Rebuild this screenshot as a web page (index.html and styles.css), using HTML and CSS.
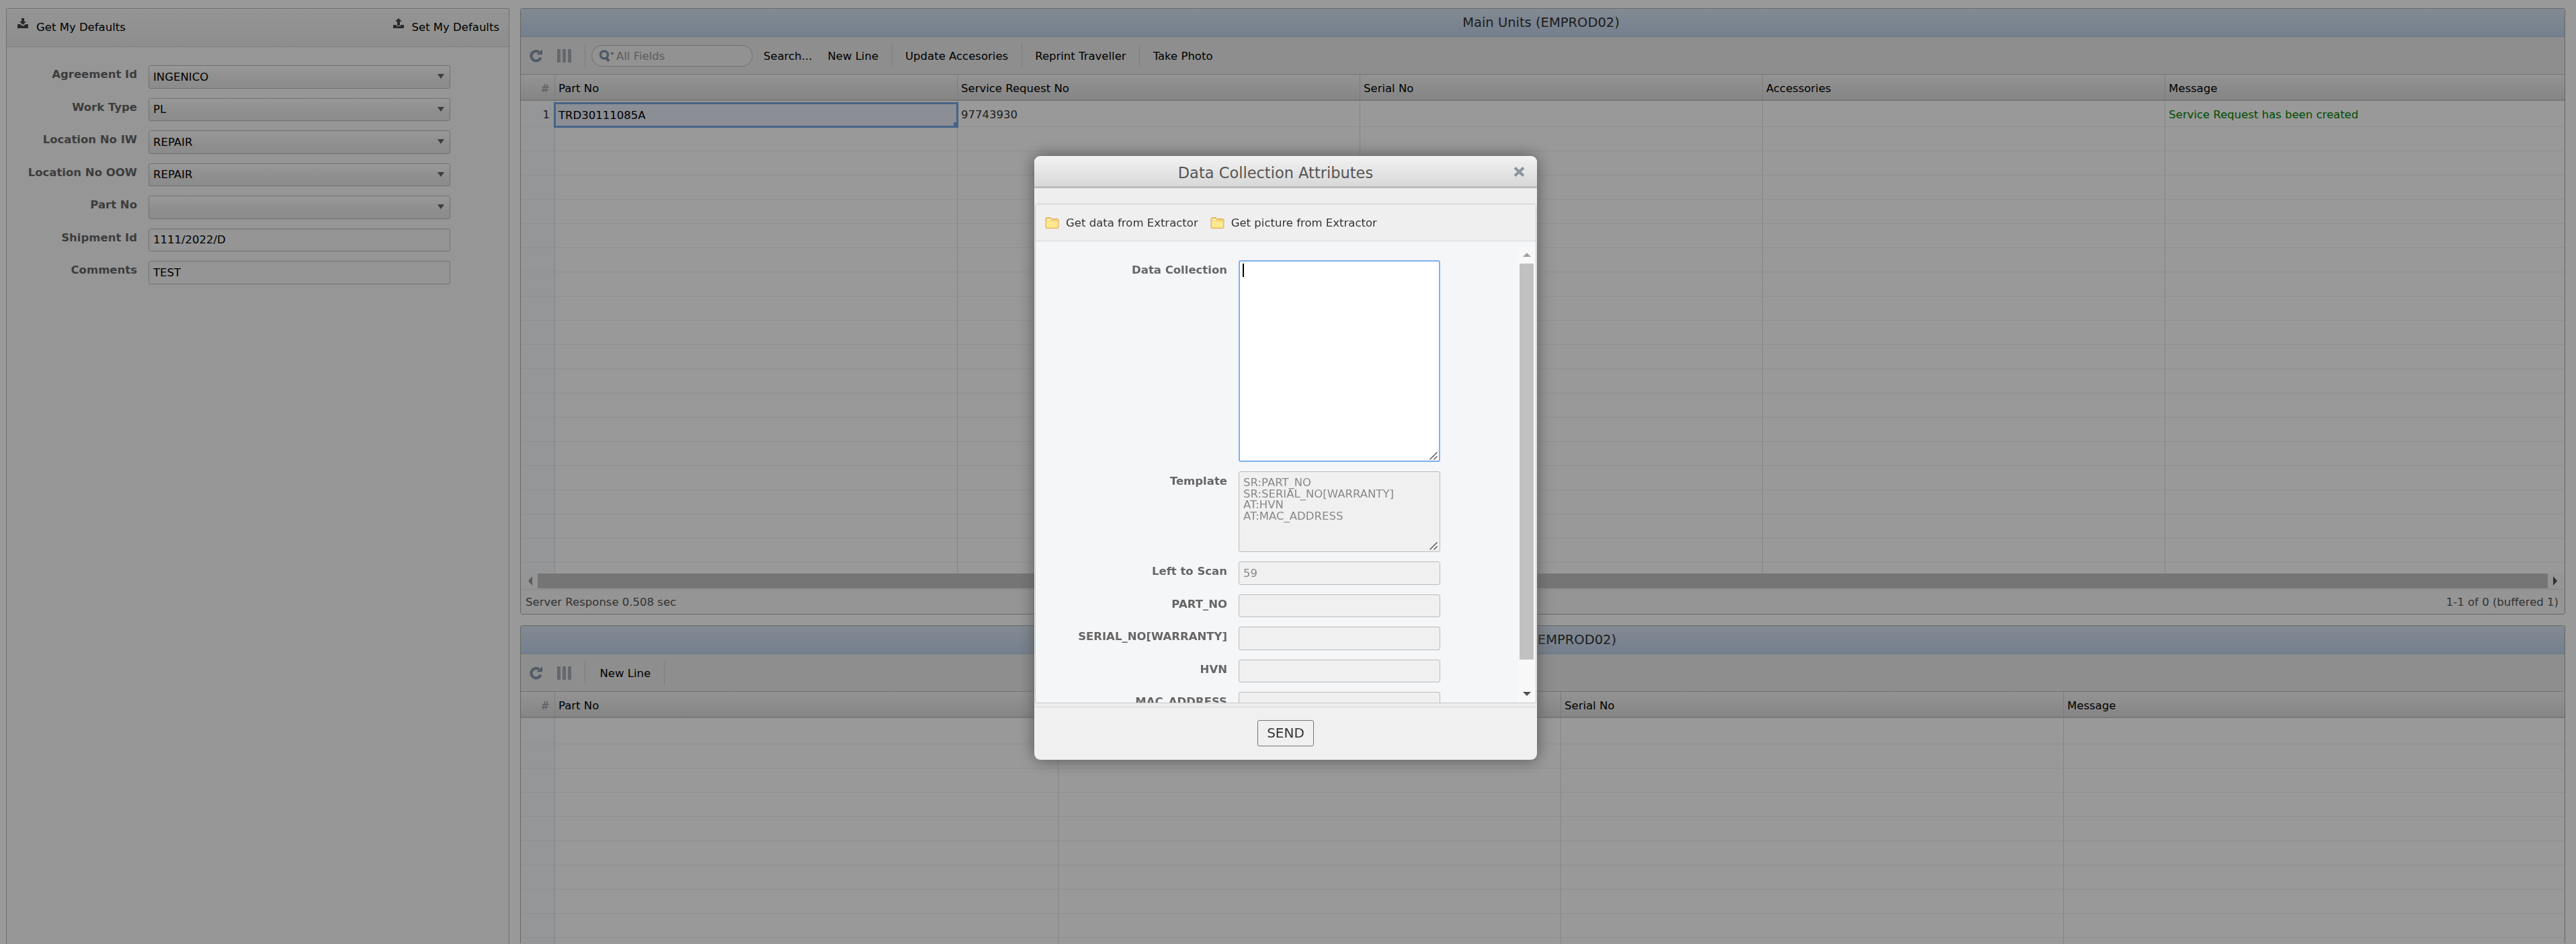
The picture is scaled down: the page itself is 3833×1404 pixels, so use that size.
FILE: index.html
```html
<!DOCTYPE html>
<html>
<head>
  <title>Data Collection</title>
  <link rel="stylesheet" href="styles.css">
</head>
<body>
  <svg class="icon-defs" width="0" height="0">
    <symbol id="i-refresh" viewBox="0 0 20 20">
      <path d="M16.500 12.500A7.200 7.200 0 1 1 14.200 4.600" fill="none" stroke="currentColor" stroke-width="4"/>
      <path d="M10.500 8.200 19 0.500V8.200Z" fill="currentColor"/>
    </symbol>
    <symbol id="i-cols" viewBox="0 0 21 20">
      <path d="M0 0h5v20H0zM8 0h5v20H8zM16 0h5v20h-5z" fill="currentColor"/>
    </symbol>
    <symbol id="i-folder" viewBox="0 0 21 17">
      <path d="M1 2.500Q1 .5 3 .5H8L10 2.500H18Q20 2.500 20 4.500V15Q20 16.500 18.500 16.500H2.500Q1 16.500 1 15Z" fill="#f3cf6e" stroke="#e0a95a"/>
      <path d="M2 6H19V15.500H2Z" fill="#fbe88f"/>
      <path d="M3 4H9" stroke="#fff" stroke-width="1.500"/>
    </symbol>
    <symbol id="i-grip" viewBox="0 0 12 12">
      <path d="M0.500 11.500 11.500 0.500M6.500 11.500 11.500 6.500" stroke="#444" stroke-width="1.200"/>
    </symbol>
  </svg>

  <div class="app">
    <aside class="side">
      <div class="side-head">
        <a class="def-btn">
          <svg width="16" height="15" viewBox="0 0 16 15"><path d="M6 0h4v5h3L8 10 3 5h3zM0 9h4l4 3 4-3h4v6H0z" fill="#464646"/></svg>
          Get My Defaults
        </a>
        <a class="def-btn">
          <svg width="16" height="15" viewBox="0 0 16 15"><path d="M8 0l5 5h-3v6H6V5H3zM0 10h5v2h6v-2h5v5H0z" fill="#464646"/></svg>
          Set My Defaults
        </a>
      </div>
      <form class="side-form">
        <div class="field">
          <label>Agreement Id</label>
          <div class="select-wrap"><select><option>INGENICO</option></select></div>
        </div>
        <div class="field">
          <label>Work Type</label>
          <div class="select-wrap"><select><option>PL</option></select></div>
        </div>
        <div class="field">
          <label>Location No IW</label>
          <div class="select-wrap"><select><option>REPAIR</option></select></div>
        </div>
        <div class="field">
          <label>Location No OOW</label>
          <div class="select-wrap"><select><option>REPAIR</option></select></div>
        </div>
        <div class="field">
          <label>Part No</label>
          <div class="select-wrap"><select><option></option></select></div>
        </div>
        <div class="field">
          <label>Shipment Id</label>
          <input type="text" value="1111/2022/D">
        </div>
        <div class="field">
          <label>Comments</label>
          <input type="text" value="TEST">
        </div>
      </form>
    </aside>

    <main class="grids">
      <section class="panel panel-main">
        <div class="panel-title">Main Units (EMPROD02)</div>
        <div class="toolbar">
          <svg class="tb-icon"><use href="#i-refresh"/></svg>
          <svg class="tb-icon tb-cols"><use href="#i-cols"/></svg>
          <span class="tb-sep"></span>
          <div class="search">
            <svg width="24" height="18" viewBox="0 0 24 18"><circle cx="8" cy="7.500" r="5.500" fill="none" stroke="#8496a8" stroke-width="3.500"/><path d="M11 12l4 5" stroke="#8496a8" stroke-width="4"/><path d="M17 4h6l-3 4z" fill="#8496a8"/></svg>
            <span>All Fields</span>
          </div>
          <a class="tb-btn tb-first">Search...</a>
          <a class="tb-btn">New Line</a>
          <span class="tb-sep"></span>
          <a class="tb-btn">Update Accesories</a>
          <span class="tb-sep"></span>
          <a class="tb-btn">Reprint Traveller</a>
          <span class="tb-sep"></span>
          <a class="tb-btn">Take Photo</a>
        </div>
        <div class="grid-head">
          <div class="cell-num">#</div>
          <div class="cell-h w599">Part No</div>
          <div class="cell-h w599">Service Request No</div>
          <div class="cell-h w599">Serial No</div>
          <div class="cell-h w599">Accessories</div>
          <div class="cell-h grow">Message</div>
        </div>
        <div class="grid-body">
          <div class="col-num"><div class="row-val">1</div></div>
          <div class="col w599"><div class="row-val row-selected">TRD30111085A<i class="sel-handle"></i></div></div>
          <div class="col w599"><div class="row-val">97743930</div></div>
          <div class="col w599"></div>
          <div class="col w599"></div>
          <div class="col grow"><div class="row-val msg-ok">Service Request has been created</div></div>
        </div>
        <div class="hscroll">
          <span class="arrow-left"></span>
          <div class="hscroll-thumb"></div>
          <span class="arrow-right"></span>
        </div>
        <div class="panel-foot">
          <span>Server Response 0.508 sec</span>
          <span>1-1 of 0 (buffered 1)</span>
        </div>
      </section>

      <section class="panel panel-lower">
        <div class="panel-title">Sub Units (EMPROD02)</div>
        <div class="toolbar">
          <svg class="tb-icon"><use href="#i-refresh"/></svg>
          <svg class="tb-icon tb-cols"><use href="#i-cols"/></svg>
          <span class="tb-sep"></span>
          <a class="tb-btn tb-newline">New Line</a>
          <span class="tb-sep"></span>
        </div>
        <div class="grid-head">
          <div class="cell-num">#</div>
          <div class="cell-h w749">Part No</div>
          <div class="cell-h w748">Service Request No</div>
          <div class="cell-h w748">Serial No</div>
          <div class="cell-h grow">Message</div>
        </div>
        <div class="grid-body">
          <div class="col-num"></div>
          <div class="col w749"></div>
          <div class="col w748"></div>
          <div class="col w748"></div>
          <div class="col grow"></div>
        </div>
      </section>
    </main>
  </div>

  <div class="overlay"></div>

  <div class="popup">
    <div class="popup-title">
      Data Collection Attributes
      <svg class="popup-close" width="17" height="15" viewBox="0 0 17 15"><path d="M2 1.500 15 13.500M15 1.500 2 13.500" stroke="#8d949b" stroke-width="4"/></svg>
    </div>
    <div class="popup-body">
      <div class="popup-inner">
        <div class="popup-tools">
          <a class="tool"><svg width="21" height="17"><use href="#i-folder"/></svg>Get data from Extractor</a>
          <a class="tool"><svg width="21" height="17"><use href="#i-folder"/></svg>Get picture from Extractor</a>
        </div>
        <div class="popup-form">
          <div class="field">
            <label>Data Collection</label>
            <div class="ta-wrap">
              <textarea class="ta-focus"></textarea>
              <span class="caret"></span>
              <svg class="ta-grip"><use href="#i-grip"/></svg>
            </div>
          </div>
          <div class="field">
            <label>Template</label>
            <div class="ta-wrap">
              <textarea class="ta-template" disabled>SR:PART_NO
SR:SERIAL_NO[WARRANTY]
AT:HVN
AT:MAC_ADDRESS</textarea>
              <svg class="ta-grip"><use href="#i-grip"/></svg>
            </div>
          </div>
          <div class="field">
            <label>Left to Scan</label>
            <input type="text" value="59" disabled>
          </div>
          <div class="field">
            <label>PART_NO</label>
            <input type="text">
          </div>
          <div class="field">
            <label>SERIAL_NO[WARRANTY]</label>
            <input type="text">
          </div>
          <div class="field">
            <label>HVN</label>
            <input type="text">
          </div>
          <div class="field">
            <label>MAC_ADDRESS</label>
            <input type="text">
          </div>
          <div class="vscroll">
            <span class="arrow-up"></span>
            <div class="vscroll-thumb"></div>
            <span class="arrow-down"></span>
          </div>
        </div>
      </div>
    </div>
    <div class="popup-foot">
      <button type="button">SEND</button>
    </div>
  </div>
</body>
</html>
```

FILE: styles.css
```css
* {
  box-sizing: border-box;
}
html,
body {
  height: 100%;
}
body {
  margin: 0;
  overflow: hidden;
  background: #fff;
  color: #000;
  font-family: "DejaVu Sans", Verdana, sans-serif;
  font-size: 16.5px;
}
input,
select,
textarea,
button {
  font-family: inherit;
  font-size: inherit;
}
.icon-defs {
  position: absolute;
}
.app {
  display: flex;
  gap: 16px;
  height: 100vh;
  padding: 12px 16px 0 9px;
}

/* left panel */
.side {
  flex: 0 0 749px;
  background: #fbfbfb;
  border: 1px solid #bbb;
  border-bottom: none;
  border-radius: 3px 3px 0 0;
}
.side-head {
  display: flex;
  justify-content: space-between;
  height: 57px;
  padding: 15px 14px 0 16px;
  background: linear-gradient(#f8f8f8, #ececec);
  border-bottom: 1px solid #d4d4d4;
}
.def-btn {
  display: flex;
  align-items: flex-start;
  gap: 12px;
  line-height: 26px;
}
.def-btn svg {
  margin-top: -1px;
}
.side-form {
  padding-top: 27px;
}
.field {
  display: flex;
  align-items: flex-start;
  gap: 17px;
}
.field label {
  flex: none;
  text-align: right;
  font-weight: bold;
  color: #666;
  line-height: 22px;
  padding-top: 3px;
}
.side-form .field {
  margin-bottom: 14px;
}
.side-form label {
  width: 194px;
}
.side-form input,
.select-wrap {
  width: 449px;
}
input {
  display: block;
  height: 34.5px;
  padding: 0 6px;
  background: #f8f8f8;
  border: 1px solid #bbb;
  border-radius: 3px;
  color: #000;
}
.select-wrap {
  position: relative;
}
.select-wrap::after {
  content: "";
  position: absolute;
  top: 13px;
  right: 9px;
  border-left: 5.5px solid transparent;
  border-right: 5.5px solid transparent;
  border-top: 7px solid #666;
}
select {
  display: block;
  width: 100%;
  height: 34.5px;
  padding: 0 6px;
  appearance: none;
  background: linear-gradient(#fff, #eeeeee 55%, #e9e9e9);
  border: 1px solid #bbb;
  border-radius: 3px;
  color: #000;
}

/* grids */
.grids {
  flex: 1;
  min-width: 0;
  display: flex;
  flex-direction: column;
  gap: 16px;
}
.panel {
  display: flex;
  flex-direction: column;
  flex: none;
  border: 1px solid #aaa;
  border-radius: 3px;
  background: #fff;
}
.panel-main {
  height: 902px;
}
.panel-lower {
  height: 474px;
  border-bottom: none;
}
.panel-title {
  flex: none;
  height: 42px;
  padding: 9px 5px 0 0;
  text-align: center;
  font-size: 19.5px;
  color: #333;
  background: linear-gradient(#dae6f3, #c2d5ed);
  border-bottom: 1px solid #b5c5d8;
}
.toolbar {
  flex: none;
  display: flex;
  align-items: center;
  height: 56px;
  padding: 0 0 0 13px;
  background: #ededed;
  border-bottom: 1px solid #c0c0c0;
}
.tb-icon {
  width: 20px;
  height: 20px;
  color: #8496a8;
}
.tb-cols {
  width: 21px;
  margin-left: 21px;
  color: #a8aeb8;
}
.tb-sep {
  flex: none;
  width: 1px;
  height: 34px;
  margin: 0 9px;
  background: #d0d0d0;
}
.tb-cols + .tb-sep {
  margin-left: 20px;
}
.search {
  display: flex;
  align-items: center;
  gap: 2px;
  width: 240px;
  height: 32px;
  padding-left: 10px;
  background: #f4f4f4;
  border: 1px solid #bbb;
  border-radius: 16px;
  color: #999;
}
.search span {
  padding-top: 2px;
}
.tb-btn {
  padding: 2px 10.5px 0;
  white-space: nowrap;
  color: #000;
}
.tb-first {
  margin: 0 2px 0 5.5px;
}
.tb-newline {
  margin-left: 2px;
}
.grid-head {
  flex: none;
  display: flex;
  height: 39px;
  background: linear-gradient(#f6f6f6, #dedede);
  border-bottom: 2px solid #c8c8c8;
  line-height: 42px;
}
.cell-num {
  flex: none;
  width: 51px;
  padding-right: 7px;
  text-align: right;
  color: #999;
  border-right: 1px solid #d0d0d0;
}
.cell-h {
  flex: none;
  padding-left: 5px;
  border-right: 1px solid #d0d0d0;
  color: #000;
  overflow: hidden;
  white-space: nowrap;
}
.w599 {
  width: 599px;
}
.w749 {
  width: 749px;
}
.w748 {
  width: 748px;
}
.grow {
  flex: 1;
  width: auto;
  border-right: none;
}
.grid-body {
  flex: 1;
  min-height: 0;
  display: flex;
  overflow: hidden;
  background: linear-gradient(#fff 0 38px, #efefef 38px 39px) 0 0 / 100% 39px no-repeat,
    repeating-linear-gradient(#fff 0 35px, #efefef 35px 36px) 0 39px;
}
.col-num {
  flex: none;
  width: 51px;
  border-right: 1px solid #dcdcdc;
  background: rgba(230, 235, 245, 0.25);
  color: #888;
  text-align: right;
}
.col-num .row-val {
  padding-right: 7px;
}
.col {
  flex: none;
  position: relative;
  border-right: 1px solid #dcdcdc;
}
.col.grow {
  flex: 1;
  border-right: none;
}
.row-val {
  height: 37px;
  padding: 3px 5px 0;
  line-height: 36px;
  color: #333;
}
.row-selected {
  position: relative;
  height: 38px;
  margin: 2px -2px 0 -2px;
  padding: 0 4px;
  line-height: 33px;
  background: #e8edf9;
  border: 3px solid #75a5de;
  color: #000;
}
.sel-handle {
  position: absolute;
  right: -3px;
  bottom: -3px;
  width: 7px;
  height: 8px;
  background: #75a5de;
}
.msg-ok {
  color: #008000;
}
.hscroll {
  flex: none;
  display: flex;
  align-items: center;
  height: 24px;
  padding: 0 11px 2px;
  gap: 8px;
  background: #f8f8f8;
  border-bottom: 1px solid #e4e4e4;
}
.hscroll-thumb {
  flex: 1;
  height: 22px;
  background: #c4c4c4;
}
.arrow-left {
  border-top: 7px solid transparent;
  border-bottom: 7px solid transparent;
  border-right: 6px solid #999;
}
.arrow-right {
  border-top: 7px solid transparent;
  border-bottom: 7px solid transparent;
  border-left: 6px solid #505050;
}
.panel-foot {
  flex: none;
  display: flex;
  justify-content: space-between;
  align-items: center;
  height: 36px;
  padding: 0 9px 0 7px;
  color: #555;
  background: #f8f8f8;
}

/* dim layer */
.overlay {
  position: fixed;
  inset: 0;
  background: rgba(0, 0, 0, 0.4);
}

/* popup */
.popup {
  position: fixed;
  left: 1539px;
  top: 232px;
  width: 748px;
  height: 898px;
  display: flex;
  flex-direction: column;
  background: #f0f0f0;
  border-radius: 9px;
  box-shadow: 0 0 25px #555;
  overflow: hidden;
}
.popup-title {
  position: relative;
  flex: none;
  height: 48px;
  padding: 12px 30px 0 0;
  text-align: center;
  font-size: 22.5px;
  color: #555;
  background: linear-gradient(#f2f2f2, #d8d8d8);
  border-bottom: 3px solid #bbb;
}
.popup-close {
  position: absolute;
  top: 16px;
  right: 18px;
}
.popup-body {
  flex: none;
  height: 772px;
  padding-top: 23px;
  border-bottom: 1px solid #d4d4d4;
  background: #eee;
}
.popup-inner {
  height: 743px;
  margin: 0 1px;
  display: flex;
  flex-direction: column;
  border: 1px solid #c8c8c8;
  border-radius: 3px;
  background: #f5f6f8;
}
.popup-tools {
  flex: none;
  display: flex;
  align-items: center;
  gap: 18px;
  height: 55px;
  padding-left: 14px;
  background: #efefef;
  border-bottom: 1px solid #d8d8d8;
  color: #333;
}
.tool {
  display: flex;
  align-items: center;
  gap: 10px;
}
.popup-form {
  position: relative;
  flex: 1;
  min-height: 0;
  padding-top: 28px;
  overflow: hidden;
}
.popup-form .field {
  margin-bottom: 14px;
}
.popup-form label {
  width: 285px;
  padding-top: 4px;
}
.popup-form input,
.popup-form textarea {
  width: 300px;
}
.popup-form input {
  background: #f0f0f0;
}
.popup-form input:disabled {
  color: #888;
}
textarea {
  display: block;
  padding: 5px 6px;
  border-radius: 3px;
  line-height: 16.5px;
  resize: none;
}
.ta-wrap {
  position: relative;
}
.ta-grip {
  position: absolute;
  right: 4px;
  bottom: 3px;
  width: 12px;
  height: 12px;
}
.ta-focus {
  height: 300px;
  background: #fff;
  border: 2px solid #7fb1ee;
  outline: none;
}
.caret {
  position: absolute;
  top: 5px;
  left: 6px;
  width: 2px;
  height: 20px;
  background: #000;
}
.ta-template {
  height: 120px;
  padding-top: 8px;
  background: #f0f0f0;
  border: 1px solid #bbb;
  color: #888;
}
.vscroll {
  position: absolute;
  top: 8px;
  right: 0;
  bottom: 2px;
  width: 26px;
  background: #f8f8f8;
}
.vscroll-thumb {
  position: absolute;
  top: 25px;
  left: 2px;
  right: 3px;
  height: 589px;
  background: #c1c1c1;
}
.arrow-up,
.arrow-down {
  position: absolute;
  left: 7px;
  border-left: 6px solid transparent;
  border-right: 6px solid transparent;
}
.arrow-up {
  top: 9px;
  border-bottom: 6px solid #a0a0a0;
}
.arrow-down {
  bottom: 8px;
  border-top: 6px solid #505050;
}
.popup-foot {
  flex: 1;
  display: flex;
  align-items: center;
  justify-content: center;
  padding-bottom: 2px;
}
.popup-foot button {
  width: 84px;
  height: 39px;
  padding: 0;
  font-size: 20px;
  color: #333;
  background: #f0f0f0;
  border: 1px solid #777;
  border-radius: 3px;
}
```
